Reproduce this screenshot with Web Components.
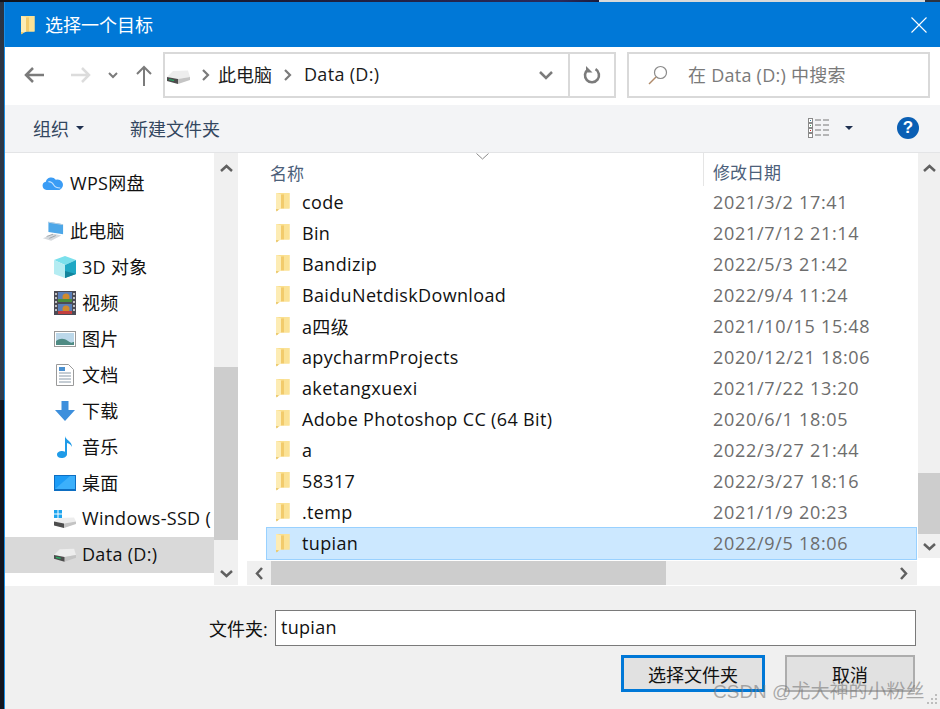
<!DOCTYPE html>
<html lang="zh">
<head>
<meta charset="utf-8">
<title>选择一个目标</title>
<style>
  html, body { margin: 0; height: 100%; overflow: hidden; background: #12151f; }
  body { font-family: "Open Sans", "Noto Sans CJK SC", sans-serif; }
</style>
</head>
<body>
<file-dialog></file-dialog>

<script>
// shared icons
const ICONS = {
  folder: `<svg width="16" height="20" viewBox="0 0 16 20"><path d="M1 1h13.500v15.500H1z" fill="#fadf8e"/><path d="M9 1h5.500v15.500H9z" fill="#fbe296"/><path d="M1 1l5.500 1.500v14L1 19z" fill="#fdecb4"/><path d="M6 2.500h3v14H6z" fill="#f2cb6c"/><path d="M1 17l3 .5L1.500 19.500z" fill="#e8c25f"/></svg>`,
  drive: `<svg width="23" height="14" viewBox="0 0 23 14"><path d="M6 1l15-.5 2 6.500L11 9 0 7z" fill="#ededed"/><path d="M11 9l12-2v3l-12 4z" fill="#c4c4c4"/><path d="M0 7l11 2v5L0 11z" fill="#4d4d4d"/><path d="M2 9.500l5 1" stroke="#22b565" stroke-width="1.200"/></svg>`,
  cloud: `<svg width="24" height="16" viewBox="0 0 24 16"><path d="M5 15.500a4.500 4.500 0 0 1-.8-8.900A6 6 0 0 1 15 4.500a5.500 5.500 0 1 1 4 11z" fill="#3a9cf5"/><path d="M7 6.500c3 0 5 2 6 4s3 3 7 3" stroke="#bfe0ff" stroke-width="1.200" fill="none"/></svg>`,
  pc: `<svg width="24" height="22" viewBox="0 0 24 22"><path d="M7 1l16 2.500v11L7 12z" fill="#4da7e8"/><path d="M7 1l16 2.500-.5 1L7.500 2z" fill="#c7d3dd"/><path d="M1 19l12-5 8 2-11 5.500z" fill="#d5d9dd"/><path d="M5 17l7-2.500M8 19l7-3" stroke="#9aa2a8" stroke-width="1"/></svg>`,
  cube: `<svg width="22" height="22" viewBox="0 0 22 22"><path d="M11 0l11 4-11 5L0 4z" fill="#7be0ec"/><path d="M0 4l11 5v13L0 18z" fill="#b4ecf2"/><path d="M22 4l-11 5v13l11-4z" fill="#1fa8c4"/><path d="M11 15l11 3-11 4z" fill="#12849c"/></svg>`,
  film: `<svg width="22" height="24" viewBox="0 0 22 24"><rect width="22" height="24" fill="#4b4b55"/><rect x="4" y="1" width="14" height="10" fill="#5a7fb8"/><rect x="4" y="13" width="14" height="10" fill="#5a7fb8"/><circle cx="12" cy="6" r="3.500" fill="#d08a2c"/><circle cx="12" cy="18" r="3.500" fill="#d08a2c"/><rect x="4" y="8" width="14" height="3" fill="#4a8d3c"/><rect x="4" y="20" width="14" height="3" fill="#c23f3f"/><path d="M2 2v20M20 2v20" stroke="#e8e8e8" stroke-width="1.500" stroke-dasharray="2 2"/></svg>`,
  picture: `<svg width="22" height="16" viewBox="0 0 22 16"><rect x=".5" y=".5" width="21" height="15" fill="#fff" stroke="#9a9a9a"/><rect x="2" y="2" width="18" height="12" fill="#bcd8ea"/><path d="M2 10c4-3 8-3 12 0s4 1 6 1v3H2z" fill="#4f8b84"/></svg>`,
  doc: `<svg width="18" height="22" viewBox="0 0 18 22"><path d="M.5.500h12l5 5v16H.5z" fill="#fff" stroke="#9a9a9a"/><path d="M3 9h12M3 12h12M3 15h12M3 18h12" stroke="#8a9aa8"/><rect x="3" y="3" width="6" height="4" fill="#4a90d0"/></svg>`,
  down: `<svg width="20" height="20" viewBox="0 0 20 20"><path d="M6.500 0h7v9H20L10 20 0 9h6.500z" fill="#3d8fdc"/></svg>`,
  music: `<svg width="16" height="22" viewBox="0 0 16 22"><path d="M8 0c.5 4 7 5 7 11-1-2.500-3-3.500-5-4v11c0 2.500-2.500 4-5.500 4S0 20.500 0 18.500 2.500 15 5 15c1 0 2 .3 3 .8z" fill="#1f9be8"/></svg>`,
  desktop: `<svg width="22" height="16" viewBox="0 0 22 16"><rect width="22" height="16" fill="#0d6ec2"/><rect x="1" y="1" width="20" height="13" fill="#1c9cf6"/><path d="M1 14L16 1h5v13z" fill="#3cb0fb"/></svg>`,
  windrive: `<svg width="22" height="18" viewBox="0 0 22 18"><path d="M5 8l15-.5 2 4L10 13.500 0 11.500z" fill="#ededed"/><path d="M10 13.500l12-2V14l-12 4z" fill="#c4c4c4"/><path d="M0 11.500l10 2V18L0 15.500z" fill="#4d4d4d"/><path d="M0 0h3.500v3.500H0zM4.500 0H8v3.500H4.500zM0 4.500h3.500V8H0zM4.500 4.500H8V8H4.500z" fill="#1fa5ee"/></svg>`
};

class TitleBar extends HTMLElement {
  constructor() {
    super();
    this.attachShadow({ mode: 'open' }).innerHTML = `
      <style>
        :host { display: flex; align-items: center; height: 45px; background: #0078d7; color: #fff; font-size: 18px; padding-left: 15px; }
        .ico { display: flex; margin-right: 9px; }
        .txt { margin-top: -2px; }
        .close { margin-left: auto; margin-right: 13px; display: flex; }
      </style>
      <span class="ico">${ICONS.folder}</span>
      <span class="txt"><slot></slot></span>
      <span class="close"><svg width="16" height="16" viewBox="0 0 16 16"><path d="M.5.500l15 15M15.500.500l-15 15" stroke="#fff" stroke-width="1.100"/></svg></span>`;
  }
}
customElements.define('title-bar', TitleBar);

class NavBar extends HTMLElement {
  constructor() {
    super();
    this.attachShadow({ mode: 'open' }).innerHTML = `
      <style>
        :host { display: flex; align-items: center; height: 58px; background: #fff; box-sizing: border-box; padding: 5px 5px 7px 0; font-size: 18px; color: #1a1a1a; }
        .btns { width: 158px; display: flex; align-items: center; flex: none; height: 46px; }
        .btns svg { flex: none; }
        .crumbs { width: 453px; height: 46px; box-sizing: border-box; border: 2px solid #d9d9d9; display: flex; align-items: center; flex: none; }
        .path { flex: 1; display: flex; align-items: center; padding-left: 2px; min-width: 0; letter-spacing: .3px; }
        .path .d { display: flex; margin-right: 10px; margin-top: 4px; }
        .label { margin-top: -3px; }
        .cjk { letter-spacing: 0; }
        .sep { margin: 0 8px 0 1px; display: flex; }
        .sep2 { margin: 0 12px 0 11px; display: flex; }
        .dd { width: 44px; display: flex; justify-content: center; align-items: center; }
        .re { width: 44px; align-self: stretch; border-left: 2px solid #d9d9d9; display: flex; justify-content: center; align-items: center; }
        .search { margin-left: 11px; width: 303px; height: 46px; box-sizing: border-box; border: 2px solid #d9d9d9; display: flex; align-items: center; flex: none; color: #7a7a7a; padding-left: 19px; letter-spacing: .25px; }
        .search svg { margin-right: 20px; }
      </style>
      <div class="btns">
        <svg style="margin-left:19px" width="20" height="18" viewBox="0 0 20 18"><path d="M9 2L2 9l7 7M2 9h18" fill="none" stroke="#7b7b7b" stroke-width="2.500"/></svg>
        <svg style="margin-left:27px" width="20" height="18" viewBox="0 0 20 18"><path d="M11 2l7 7-7 7M18 9H0" fill="none" stroke="#dcdcdc" stroke-width="2.500"/></svg>
        <svg style="margin-left:17px" width="10" height="7" viewBox="0 0 10 7"><path d="M1 1l4 4 4-4" fill="none" stroke="#7b7b7b" stroke-width="2"/></svg>
        <svg style="margin-left:17px" width="18" height="21" viewBox="0 0 18 21"><path d="M2 9l7-7 7 7M9 2v19" fill="none" stroke="#7b7b7b" stroke-width="2"/></svg>
      </div>
      <div class="crumbs">
        <div class="path">
          <span class="d">${ICONS.drive}</span>
          <span class="sep"><svg width="9" height="12" viewBox="0 0 9 12"><path d="M2 1l5 5-5 5" fill="none" stroke="#7b7b7b" stroke-width="2.200"/></svg></span>
          <span class="label cjk">此电脑</span>
          <span class="sep2"><svg width="9" height="12" viewBox="0 0 9 12"><path d="M2 1l5 5-5 5" fill="none" stroke="#7b7b7b" stroke-width="2.200"/></svg></span>
          <span class="label">Data (D:)</span>
        </div>
        <div class="dd"><svg width="14" height="9" viewBox="0 0 14 9"><path d="M1 1l6 6 6-6" fill="none" stroke="#7b7b7b" stroke-width="2.500"/></svg></div>
        <div class="re"><svg width="18" height="18" viewBox="0 0 18 18"><path d="M12.500 3.200A7 7 0 1 1 5 3.500" fill="none" stroke="#7b7b7b" stroke-width="2.600"/><path d="M3 0v6.500h6.500z" fill="#7b7b7b"/></svg></div>
      </div>
      <div class="search">
        <svg width="20" height="20" viewBox="0 0 20 20"><circle cx="12.500" cy="7.500" r="6" fill="none" stroke="#8a8a8a" stroke-width="1.200"/><path d="M8 12l-7 7" stroke="#b08a6a" stroke-width="1.400"/></svg>
        <span class="label">在 Data (D:) 中搜索</span>
      </div>`;
  }
}
customElements.define('nav-bar', NavBar);

class ToolBar extends HTMLElement {
  constructor() {
    super();
    this.attachShadow({ mode: 'open' }).innerHTML = `
      <style>
        :host { display: flex; align-items: center; height: 48px; box-sizing: border-box; background: #f3f4f6; border-bottom: 1px solid #e3e4e6; padding: 0 0 2px 28px; font-size: 18px; color: #33475f; }
        .caret { width: 0; height: 0; border: 4px solid transparent; border-top: 4px solid #1f3050; border-bottom: 0; }
        .new { margin-left: 46px; }
        .org-caret { margin-left: 7px; }
        .view { margin-left: auto; display: flex; }
        .view-caret { margin-left: 15px; }
        .help { margin: 0 21px 0 44px; width: 22px; height: 22px; border-radius: 50%; background: #0a5fb4; color: #fff; font: bold 17px/22px "Liberation Sans", sans-serif; text-align: center; }
      </style>
      <span>组织</span><span class="caret org-caret"></span>
      <span class="new">新建文件夹</span>
      <span class="view"><svg width="22" height="20" viewBox="0 0 22 20"><g fill="#fff" stroke="#8a8a8a"><rect x=".5" y=".5" width="4" height="4"/><rect x=".5" y="5.500" width="4" height="4"/><rect x=".5" y="10.500" width="4" height="4"/><rect x=".5" y="15.500" width="4" height="4"/></g><rect x="2" y="2" width="1" height="1" fill="#2b7a9c"/><rect x="2" y="7" width="1" height="1" fill="#3a9a5a"/><rect x="2" y="12" width="1" height="1" fill="#d02020"/><path d="M7 2h6M15 2h6M7 7h6M15 7h6M7 12h6M15 12h6M7 17h6M15 17h6" stroke="#777" stroke-width="1"/></svg></span>
      <span class="view-caret caret"></span>
      <span class="help">?</span>`;
  }
}
customElements.define('tool-bar', ToolBar);

class ScrollBar extends HTMLElement {
  constructor() {
    super();
    const horizontal = this.getAttribute('dir') === 'h';
    const a = horizontal ? 'M7 1L2 6.500 7 12' : 'M1 7l5.500-5L12 7';
    const b = horizontal ? 'M2 1l5 5.500L2 12' : 'M1 2l5.500 5L12 2';
    const size = horizontal ? 'width="9" height="13" viewBox="0 0 9 13"' : 'width="13" height="9" viewBox="0 0 13 9"';
    this.attachShadow({ mode: 'open' }).innerHTML = `
      <style>
        :host { display: flex; flex-direction: ${horizontal ? 'row' : 'column'}; background: #f0f0f0; flex: none; box-sizing: border-box; }
        .end { flex: none; display: flex; align-items: center; justify-content: center; ${horizontal ? 'width: 24px' : 'height: 30px'}; }
        .end.last { ${horizontal ? 'padding-right: 4px; box-sizing: border-box' : 'height: 24px'}; }
        .track { flex: 1; min-width: 0; min-height: 0; display: flex; flex-direction: inherit; }
        .lead { flex: none; ${horizontal ? 'width: var(--lead)' : 'height: var(--lead)'}; }
        .thumb { flex: none; background: #cdcdcd; ${horizontal ? 'width: var(--thumb)' : 'height: var(--thumb)'}; }
      </style>
      <div class="end"><svg ${size}><path d="${a}" fill="none" stroke="#606060" stroke-width="2.500"/></svg></div>
      <div class="track"><div class="lead"></div><div class="thumb"></div></div>
      <div class="end last"><svg ${size}><path d="${b}" fill="none" stroke="#606060" stroke-width="2.500"/></svg></div>`;
  }
}
customElements.define('scroll-bar', ScrollBar);

class TreeItem extends HTMLElement {
  constructor() {
    super();
    const icon = ICONS[this.getAttribute('icon')] || '';
    this.attachShadow({ mode: 'open' }).innerHTML = `
      <style>
        :host { display: flex; align-items: center; height: 36px; font-size: 18px; color: #111; white-space: nowrap; overflow: hidden; padding-left: 49px; box-sizing: border-box; letter-spacing: .3px; }
        :host([top]) { padding-left: 37px; }
        :host([selected]) { background: #d9d9d9; }
        .ico { width: 22px; flex: none; display: flex; justify-content: center; margin-right: 6px; }
        .txt { margin-top: -2px; }
      </style>
      <span class="ico">${icon}</span><span class="txt"><slot></slot></span>`;
  }
}
customElements.define('tree-item', TreeItem);

class FileRow extends HTMLElement {
  constructor() {
    super();
    this.attachShadow({ mode: 'open' }).innerHTML = `
      <style>
        :host { display: flex; align-items: center; height: 31px; margin-left: 23px; font-size: 18px; color: #111; white-space: nowrap; box-sizing: border-box; position: relative; }
        :host([selected]) { background: #cce8ff; box-shadow: inset 0 0 0 1px #99d1ff; height: 33px; padding-bottom: 2px; }
        .ico { position: absolute; left: 9px; top: 6px; display: flex; }
        .name { margin-left: 36px; width: 411px; flex: none; letter-spacing: .35px; }
        .date { color: #6d6d6d; letter-spacing: .7px; }
      </style>
      <span class="ico">${ICONS.folder}</span>
      <span class="name"><slot></slot></span>
      <span class="date">${this.getAttribute('date')}</span>`;
  }
}
customElements.define('file-row', FileRow);

class FileList extends HTMLElement {
  constructor() {
    super();
    this.attachShadow({ mode: 'open' }).innerHTML = `
      <style>
        :host { display: flex; flex-direction: column; flex: 1; min-width: 0; background: #fff; position: relative; }
        .body { flex: 1; display: flex; min-height: 0; }
        .rows { flex: 1; min-width: 0; }
        .head { display: flex; height: 33px; font-size: 17px; color: #4c607a; align-items: center; box-sizing: border-box; padding-top: 5px; }
        .head .n { margin-left: 27px; width: 433px; flex: none; }
        .head .d { border-left: 1px solid #e5e5e5; padding-left: 9px; height: 33px; margin-top: -5px; padding-top: 5px; box-sizing: border-box; line-height: 30px; }
        .sort { position: absolute; left: 233px; top: 0; display: flex; }
        .v { width: 22px; margin-left: 1px; --lead: 290px; --thumb: 61px; }
        .foot { display: flex; height: 28px; flex: none; }
        .h { flex: 1; margin: 3px 0 1px 4px; --lead: 0px; --thumb: 395px; }
        .corner { width: 23px; flex: none; }
      </style>
      <svg class="sort" width="13" height="7" viewBox="0 0 13 7"><path d="M.5.500l6 5.500 6-5.500" fill="none" stroke="#8a8a8a"/></svg>
      <div class="body">
        <div class="rows">
          <div class="head"><span class="n">名称</span><span class="d">修改日期</span></div>
          <slot></slot>
        </div>
        <scroll-bar class="v"></scroll-bar>
      </div>
      <div class="foot"><scroll-bar class="h" dir="h"></scroll-bar><div class="corner"></div></div>`;
  }
}
customElements.define('file-list', FileList);

class DialogFooter extends HTMLElement {
  constructor() {
    super();
    this.attachShadow({ mode: 'open' }).innerHTML = `
      <style>
        :host { display: block; height: 123px; background: #f0f0f0; font-size: 18px; color: #111; box-sizing: border-box; padding-top: 24px; position: relative; }
        .field { display: flex; align-items: center; padding-left: 204px; }
        .field label { width: 66px; flex: none; }
        .input { width: 641px; height: 36px; box-sizing: border-box; border: 1px solid #7a7a7a; background: #fff; line-height: 32px; padding-left: 5px; flex: none; letter-spacing: .3px; }
        .btns { display: flex; margin-top: 9px; padding-left: 616px; }
        .btn { height: 37px; box-sizing: border-box; background: #e1e1e1; display: flex; align-items: center; justify-content: center; flex: none; }
        .ok { width: 144px; border: 3px solid #0078d7; }
        .no { width: 130px; border: 2px solid #adadad; margin-left: 20px; }
        .grip { position: absolute; right: 1px; bottom: 3px; }
      </style>
      <div class="field"><label>文件夹:</label><div class="input">tupian</div></div>
      <div class="btns"><div class="btn ok">选择文件夹</div><div class="btn no">取消</div></div>
      <svg class="grip" width="14" height="14" viewBox="0 0 14 14"><path d="M10 2h2v2h-2zM6 6h2v2H6zM10 6h2v2h-2zM2 10h2v2H2zM6 10h2v2H6zM10 10h2v2h-2z" fill="#bdbdbd"/></svg>`;
  }
}
customElements.define('dialog-footer', DialogFooter);

class FileDialog extends HTMLElement {
  constructor() {
    super();
    const tree = [
      ['cloud', 'WPS网盘', 'top'],
      ['pc', '此电脑', 'top'],
      ['cube', '3D 对象'],
      ['film', '视频'],
      ['picture', '图片'],
      ['doc', '文档'],
      ['down', '下载'],
      ['music', '音乐'],
      ['desktop', '桌面'],
      ['windrive', 'Windows-SSD ('],
      ['drive', 'Data (D:)', 'selected']
    ];
    const files = [
      ['code', '2021/3/2 17:41'],
      ['Bin', '2021/7/12 21:14'],
      ['Bandizip', '2022/5/3 21:42'],
      ['BaiduNetdiskDownload', '2022/9/4 11:24'],
      ['a四级', '2021/10/15 15:48'],
      ['apycharmProjects', '2020/12/21 18:06'],
      ['aketangxuexi', '2021/7/22 13:20'],
      ['Adobe Photoshop CC (64 Bit)', '2020/6/1 18:05'],
      ['a', '2022/3/27 21:44'],
      ['58317', '2022/3/27 18:16'],
      ['.temp', '2021/1/9 20:23'],
      ['tupian', '2022/9/5 18:06']
    ];
    this.attachShadow({ mode: 'open' }).innerHTML = `
      <style>
        :host {
          display: block; position: relative; height: 709px; box-sizing: border-box; padding: 2px 0 0 4px;
          background:
            linear-gradient(to right, #10131c 0, #1c1d3a 300px, #2a2a5c 560px, #1b1b3a 599px, #d9d9d9 599px, #d9d9d9 925px, #2c3340 925px) 0 0 / 100% 2px no-repeat,
            linear-gradient(to bottom, #2a3443 0, #2f3a4a 400px, #12151f 400px, #12151f 100%);
        }
        .win { height: 707px; border-left: 1px solid #1a8fe6; display: flex; flex-direction: column; background: #fff; }
        .main { flex: none; height: 433px; display: flex; background: #fff; }
        .side { width: 209px; flex: none; padding-top: 12px; box-sizing: border-box; overflow: hidden; }
        .side .gap { height: 12px; }
        .sbar { width: 24px; margin-right: 5px; --lead: 184px; --thumb: 173px; height: 432px; }
        .mark { position: absolute; left: 713px; top: 676px; font-size: 19px; color: rgba(120,120,120,.6); white-space: nowrap; font-family: "Liberation Sans", "Noto Sans CJK SC", sans-serif; }
      </style>
      <div class="win">
        <title-bar>选择一个目标</title-bar>
        <nav-bar></nav-bar>
        <tool-bar></tool-bar>
        <div class="main">
          <div class="side">
            ${tree.map((t, i) => `${i === 1 ? '<div class="gap"></div>' : ''}<tree-item icon="${t[0]}" ${t[2] || ''}>${t[1]}</tree-item>`).join('')}
          </div>
          <scroll-bar class="sbar"></scroll-bar>
          <file-list>
            ${files.map((f, i) => `<file-row date="${f[1]}" ${i === files.length - 1 ? 'selected' : ''}>${f[0]}</file-row>`).join('')}
          </file-list>
        </div>
        <dialog-footer></dialog-footer>
      </div>
      <span class="mark">CSDN @尤大神的小粉丝</span>`;
  }
}
customElements.define('file-dialog', FileDialog);
</script>
</body>
</html>
